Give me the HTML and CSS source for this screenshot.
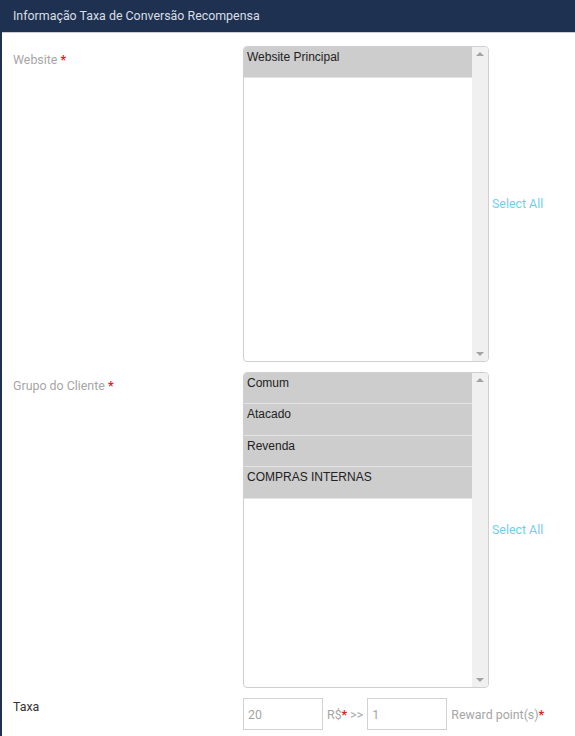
FILE: index.html
```html
<!DOCTYPE html>
<html lang="pt-BR">
<head>
    <meta charset="UTF-8">
    <meta name="viewport" content="width=device-width, initial-scale=1.0">
    <title>Informação Taxa de Conversão Recompensa</title>
    <link rel="stylesheet" href="styles.css">
</head>
<body>
    <div class="panel">
        <header class="panel-head">Informação Taxa de Conversão Recompensa</header>
        <div class="panel-body">
            <div class="field">
                <label class="field-label">Website <span class="req">*</span></label>
                <div class="listbox">
                    <div class="options">
                        <div class="option">Website Principal</div>
                    </div>
                    <div class="scroll">
                        <span class="arrow up"></span>
                        <span class="arrow down"></span>
                    </div>
                </div>
                <a class="select-all" href="#">Select All</a>
            </div>

            <div class="field">
                <label class="field-label">Grupo do Cliente <span class="req">*</span></label>
                <div class="listbox">
                    <div class="options">
                        <div class="option">Comum</div>
                        <div class="option">Atacado</div>
                        <div class="option">Revenda</div>
                        <div class="option">COMPRAS INTERNAS</div>
                    </div>
                    <div class="scroll">
                        <span class="arrow up"></span>
                        <span class="arrow down"></span>
                    </div>
                </div>
                <a class="select-all" href="#">Select All</a>
            </div>

            <div class="field rate">
                <label class="field-label dark">Taxa</label>
                <div class="rate-inputs">
                    <input class="text-input" type="text" value="20">
                    <span class="unit">R$<span class="req">*</span> &gt;&gt;</span>
                    <input class="text-input" type="text" value="1">
                    <span class="unit">Reward point(s)<span class="req">*</span></span>
                </div>
            </div>
        </div>
    </div>
</body>
</html>
```

FILE: styles.css
```css
/* Global */
body {
    margin: 0;
    font-family: Roboto, "Liberation Sans", sans-serif;
    font-size: 12.4px;
    color: #333;
    background: #fff;
}

.panel {
    border-left: 2px solid #1e3150;
    min-height: 736px;
    box-sizing: border-box;
}

/* Header */
.panel-head {
    height: 32px;
    line-height: 32px;
    padding-left: 11px;
    background-color: #1e3150;
    color: #d9dee6;
    border-bottom: 1px solid #c9ccd1;
}

.panel-body {
    padding: 13px 0 0 11px;
    display: flex;
    flex-direction: column;
    gap: 10px;
}

/* Rows */
.field {
    display: grid;
    grid-template-columns: 230px 246px auto;
    align-items: start;
}

.field-label {
    padding-top: 5px;
    line-height: 18px;
    color: #a6a6a6;
}

.field-label.dark {
    padding-top: 0;
    color: #333;
}

.req {
    color: #e0221c;
    font-weight: bold;
}

/* Multi select */
.listbox {
    height: 316px;
    box-sizing: border-box;
    border: 1px solid #cfcfcf;
    border-radius: 4px;
    display: flex;
    overflow: hidden;
}

.options {
    flex: 1;
}

.option {
    height: 31.4px;
    box-sizing: border-box;
    padding: 2px 3px;
    line-height: 16px;
    background: #cdcdcd;
    border-bottom: 1px solid #e4e4e4;
    font-family: "Liberation Sans", Arial, sans-serif;
    font-size: 12px;
    color: #222;
}

.scroll {
    width: 16px;
    background: #f0f0f0;
    display: flex;
    flex-direction: column;
    justify-content: space-between;
    align-items: center;
    padding: 5px 0;
}

.arrow {
    width: 0;
    height: 0;
    border-left: 4px solid transparent;
    border-right: 4px solid transparent;
}

.arrow.up {
    border-bottom: 4px solid #a3a3a3;
}

.arrow.down {
    border-top: 4px solid #a3a3a3;
}

.select-all {
    align-self: center;
    margin: 0 0 2px 3px;
    color: #6ed0ee;
    text-decoration: none;
}

/* Rate row */
.rate {
    grid-template-columns: 230px auto;
}

.rate-inputs {
    display: flex;
    align-items: center;
    gap: 4px;
}

.text-input {
    width: 80px;
    height: 32px;
    box-sizing: border-box;
    border: 1px solid #d2d2d2;
    padding: 0 4px;
    font-family: Roboto, sans-serif;
    font-size: 12.4px;
    color: #a5a5a5;
    outline: none;
}

.unit {
    color: #a6a6a6;
}
```
